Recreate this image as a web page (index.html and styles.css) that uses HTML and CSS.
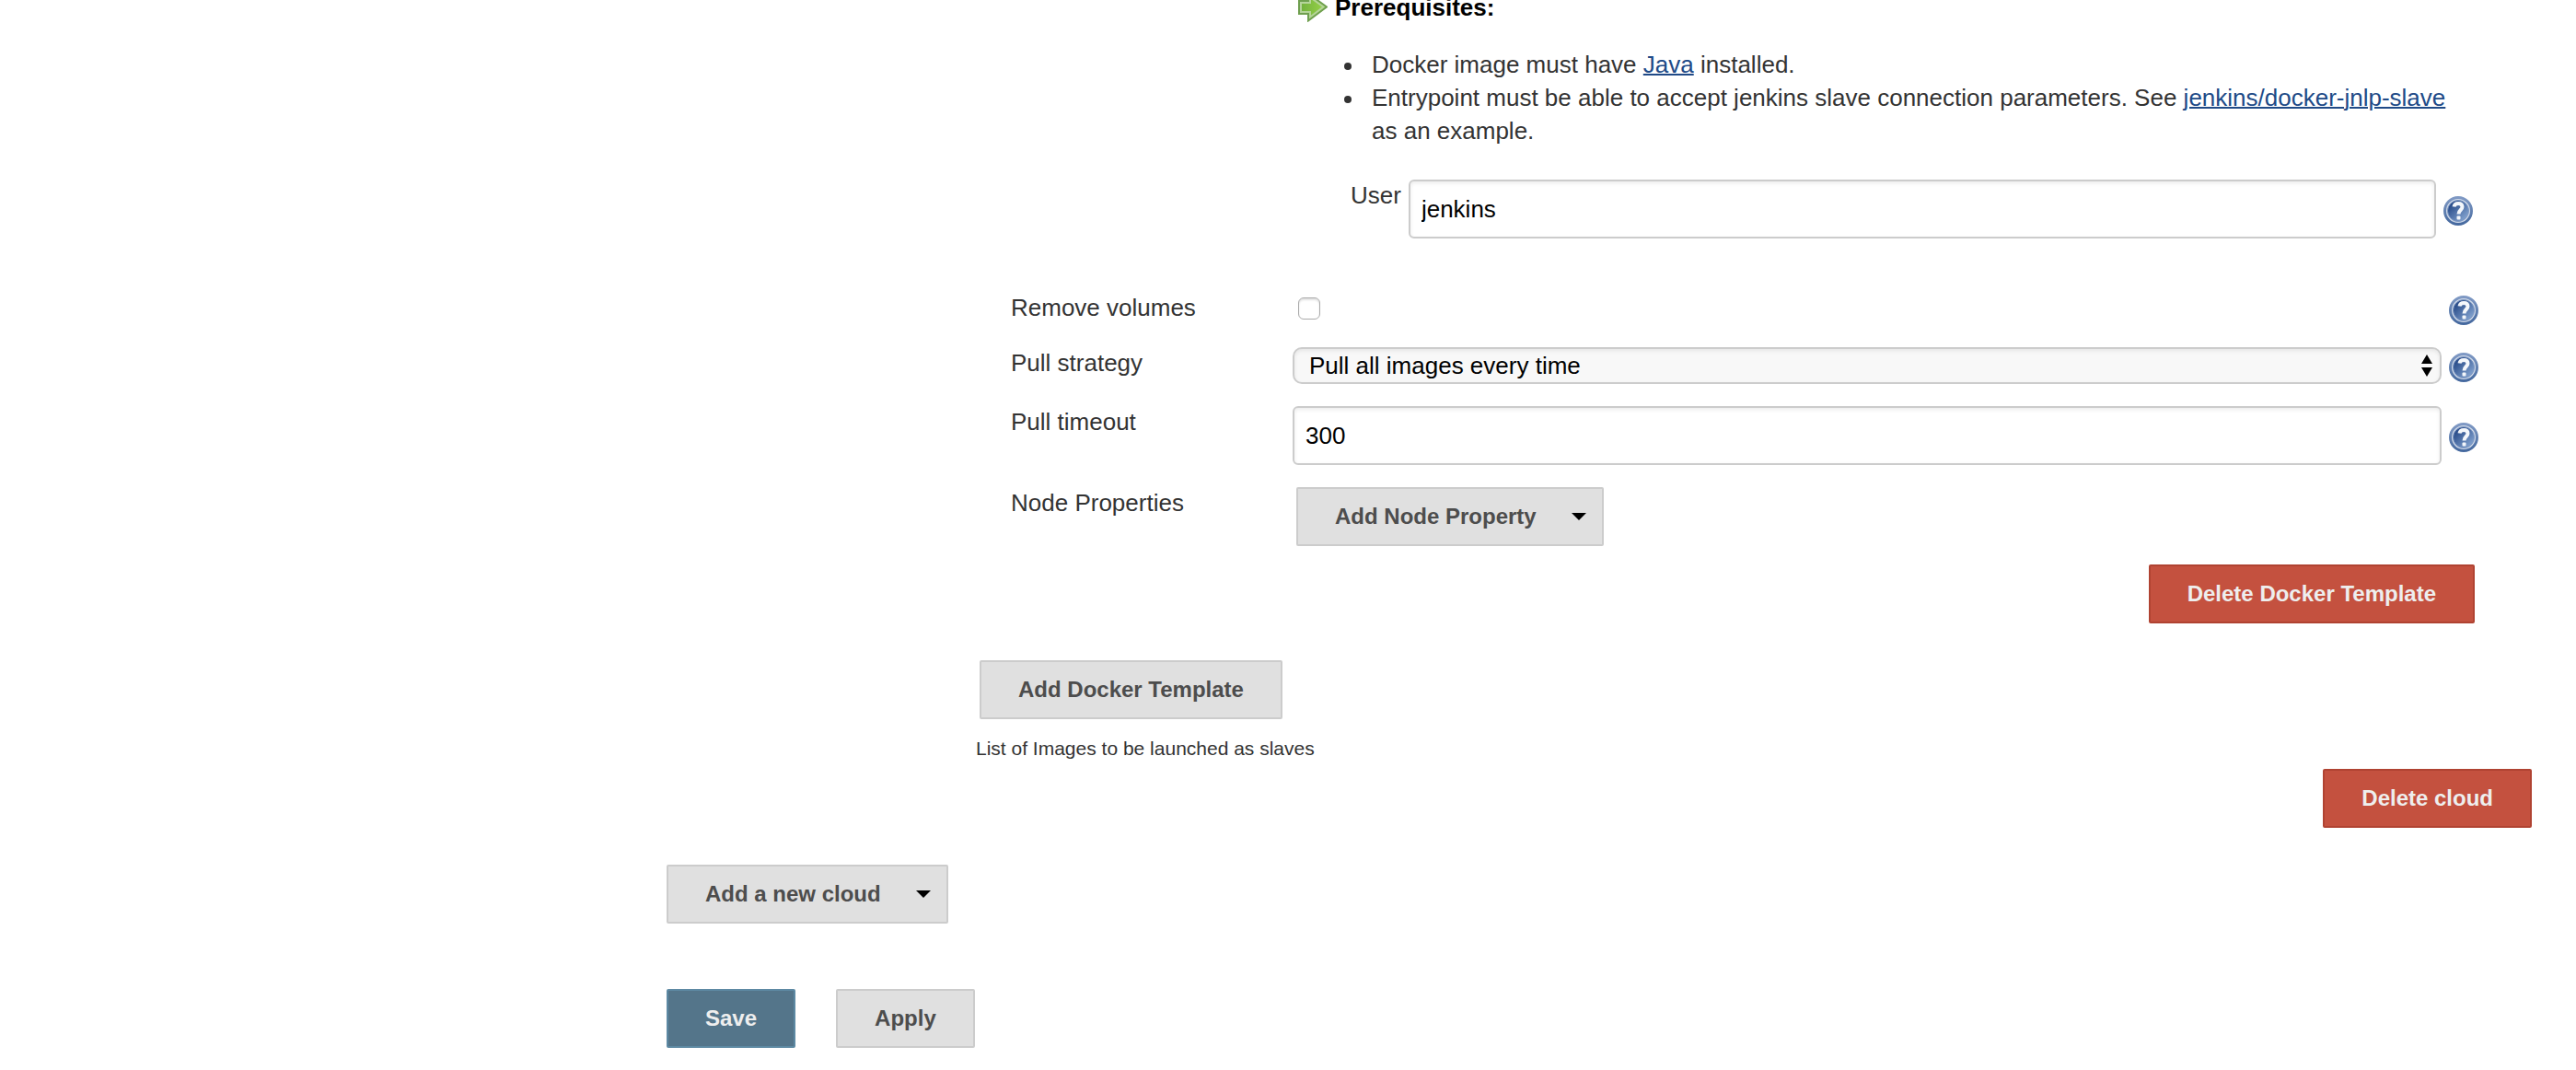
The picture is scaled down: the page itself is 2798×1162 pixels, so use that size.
FILE: index.html
```html
<!DOCTYPE html>
<html lang="en">
<head>
<meta charset="utf-8">
<title>Configure System</title>
<link rel="stylesheet" href="styles.css">
</head>
<body>
<svg class="sprite" aria-hidden="true">
  <defs>
    <linearGradient id="help-fill" x1="0" y1="0" x2="1" y2="1">
      <stop offset="0.2" stop-color="#2c4f8c"/>
      <stop offset="0.9" stop-color="#86a6d2"/>
    </linearGradient>
    <linearGradient id="help-ring" x1="0" y1="0" x2="0" y2="1">
      <stop offset="0" stop-color="#7f99c4"/>
      <stop offset="1" stop-color="#45699f"/>
    </linearGradient>
    <linearGradient id="arrow-fill" x1="0" y1="0" x2="1" y2="0">
      <stop offset="0" stop-color="#6fae3c"/>
      <stop offset="1" stop-color="#9bd64a"/>
    </linearGradient>
    <symbol id="help" viewBox="0 0 32 32">
      <circle cx="16" cy="16" r="14.500" fill="#d3dcea" stroke="url(#help-ring)" stroke-width="3"/>
      <circle cx="16" cy="16" r="11.500" fill="url(#help-fill)" stroke="#7f99c4" stroke-width="1"/>
      <path d="M11.500 11.500C12 8.600 14 8 16.200 8C19 8 20.500 9.500 20.500 11.800C20.500 15 16.500 15.200 16.500 19.500" fill="none" stroke="#f4f7fb" stroke-width="4"/>
      <rect x="14.500" y="21.500" width="4" height="4" rx="1" fill="#f4f7fb"/>
    </symbol>
  </defs>
</svg>

<form class="config" action="#">
  <section class="cloud">
    <div class="template">
      <div class="image-settings">
        <h2 class="notice">
          <svg class="notice-icon" viewBox="0 0 32 32" aria-hidden="true">
            <path d="M1 9H11V1L31 15.500L11 30.500V23H1Z" fill="url(#arrow-fill)" stroke="#6f9f4f" stroke-width="2"/>
            <path d="M3 11H13V5L27.500 15.500L13 26.500V21H3Z" fill="none" stroke="#b5d49a" stroke-width="2"/>
          </svg>
          Prerequisites:
        </h2>
        <ul class="requirements">
          <li>Docker image must have <a href="#java">Java</a> installed.</li>
          <li>Entrypoint must be able to accept jenkins slave connection parameters. See <a href="#docker-jnlp-slave">jenkins/docker-jnlp-slave</a> as an example.</li>
        </ul>
        <div class="user-row">
          <label class="label" for="user">User</label>
          <input class="field" id="user" type="text" value="jenkins">
          <button class="help" type="button" aria-label="Help for User"><svg><use href="#help"/></svg></button>
        </div>
      </div>

      <div class="settings">
        <div class="row">
          <label class="label" for="volumes">Remove volumes</label>
          <input class="check" id="volumes" type="checkbox">
          <button class="help" type="button" aria-label="Help for Remove volumes"><svg><use href="#help"/></svg></button>
        </div>
        <div class="row">
          <label class="label" for="strategy">Pull strategy</label>
          <div class="picker">
            <select class="select" id="strategy">
              <option>Pull all images every time</option>
            </select>
            <svg class="picker-arrows" viewBox="0 0 12 24" aria-hidden="true"><path d="M0 10L6 0L12 10ZM0 14H12L6 24Z"/></svg>
          </div>
          <button class="help" type="button" aria-label="Help for Pull strategy"><svg><use href="#help"/></svg></button>
        </div>
        <div class="row">
          <label class="label" for="timeout">Pull timeout</label>
          <input class="field" id="timeout" type="text" value="300">
          <button class="help" type="button" aria-label="Help for Pull timeout"><svg><use href="#help"/></svg></button>
        </div>
        <div class="row">
          <span class="label">Node Properties</span>
          <div class="actions">
            <button class="button menu" type="button">Add Node Property <svg class="caret" viewBox="0 0 16 8" aria-hidden="true"><path d="M0 0H16L8 8Z"/></svg></button>
          </div>
        </div>
      </div>
      <div class="template-footer">
        <button class="button danger" type="button">Delete Docker Template</button>
      </div>
    </div>

    <div class="add-template">
      <button class="button" type="button">Add Docker Template</button>
    </div>
    <p class="description">List of Images to be launched as slaves</p>
    <div class="cloud-footer">
      <button class="button danger" type="button">Delete cloud</button>
    </div>
  </section>

  <div class="add-cloud">
    <button class="button menu" type="button">Add a new cloud <svg class="caret" viewBox="0 0 16 8" aria-hidden="true"><path d="M0 0H16L8 8Z"/></svg></button>
  </div>
  <div class="submit-bar">
    <button class="button primary" type="submit">Save</button>
    <button class="button" type="button">Apply</button>
  </div>
</form>
</body>
</html>
```
FILE: styles.css
```css
* {
  box-sizing: border-box;
}

body {
  margin: 0;
  overflow-x: hidden;
  background: #fff;
  color: #333;
  font: 26px/36px "Liberation Sans", Arial, Helvetica, sans-serif;
}

a {
  color: #204a87;
  text-decoration-thickness: 2px;
}

button,
input,
select {
  margin: 0;
  font: inherit;
}

.sprite {
  position: absolute;
  width: 0;
  height: 0;
}

.config {
  margin-top: -10px;
  padding: 0 48px 24px 724px;
}

.cloud {
  padding-left: 336px;
}

.template {
  padding: 0 58px 0 38px;
}

/* Nested container settings */
.image-settings {
  padding: 0 6px 0 312px;
}

.notice {
  display: flex;
  align-items: center;
  gap: 8px;
  margin: 0 0 26px;
  color: #000;
  font-size: 26px;
  font-weight: bold;
}

.notice-icon {
  width: 32px;
  height: 32px;
}

.requirements {
  margin: 0 0 35px;
  padding-left: 80px;
  list-style: none;
}

.requirements li::before {
  content: "";
  display: inline-block;
  width: 8px;
  height: 8px;
  margin: 0 22px 0 -30px;
  border-radius: 50%;
  background: #333;
  vertical-align: middle;
}

.user-row {
  display: grid;
  grid-template-columns: auto 1fr 32px;
  column-gap: 8px;
  padding-left: 57px;
}

/* Settings rows */
.settings {
  display: flex;
  flex-direction: column;
  gap: 24px;
  margin-top: 58px;
}

.row {
  display: grid;
  grid-template-columns: 298px 1fr 32px;
  column-gap: 8px;
  min-height: 36px;
}

.label {
  align-self: start;
  line-height: 34px;
}

.field {
  width: 100%;
  height: 64px;
  padding: 0 12px;
  border: 2px solid #ccc;
  border-radius: 6px;
  background: #fff;
  box-shadow: inset 0 2px 4px rgba(0, 0, 0, 0.08);
  color: #000;
}

.check {
  appearance: none;
  align-self: center;
  width: 24px;
  height: 24px;
  margin-left: 6px;
  border: 1px solid #aaa;
  border-radius: 6px;
  background: #fff;
  box-shadow: inset 0 2px 2px rgba(0, 0, 0, 0.12);
}

.check:checked {
  background: #4b758b;
}

.picker {
  position: relative;
}

.select {
  appearance: none;
  display: block;
  width: 100%;
  height: 40px;
  padding: 0 40px 0 16px;
  border: 2px solid #ccc;
  border-radius: 10px;
  background: #f8f8f8;
  box-shadow: inset 0 2px 4px rgba(0, 0, 0, 0.08);
  color: #000;
}

.picker-arrows {
  position: absolute;
  top: 8px;
  right: 10px;
  width: 12px;
  height: 24px;
  pointer-events: none;
}

.help {
  align-self: center;
  width: 32px;
  padding: 4px 0 0;
  border: 0;
  background: none;
}

.help svg {
  display: block;
  width: 32px;
  height: 32px;
}

/* Buttons */
.button {
  height: 64px;
  padding: 0 40px;
  border: 2px solid #ccc;
  border-radius: 2px;
  background: #e0e0e0;
  color: #4d4d4d;
  font-size: 24px;
  font-weight: bold;
}

.menu {
  display: flex;
  align-items: center;
  gap: 38px;
  padding-right: 17px;
}

.caret {
  width: 16px;
  height: 8px;
  fill: #000;
}

.primary {
  border-color: #5d89a3;
  background: #54758a;
  color: #eee;
}

.danger {
  border-color: #b04332;
  background: #c4513f;
  color: #eee;
}

.actions {
  padding-left: 4px;
}

.template-footer {
  display: flex;
  justify-content: flex-end;
  margin-top: 20px;
  padding-right: 4px;
}

.add-template {
  display: flex;
  margin-top: 40px;
  padding-left: 4px;
}

.description {
  margin: 14px 0 0;
  font-size: 21px;
}

.cloud-footer {
  display: flex;
  justify-content: flex-end;
  margin-top: 4px;
}

.add-cloud {
  display: flex;
  margin-top: 40px;
}

.submit-bar {
  display: flex;
  gap: 44px;
  margin-top: 71px;
}
```
